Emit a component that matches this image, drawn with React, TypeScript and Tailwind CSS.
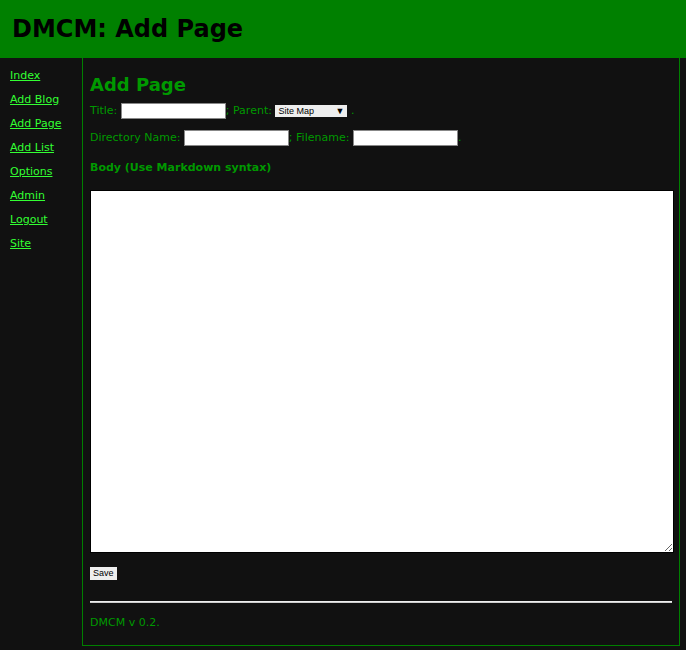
export default function App() {
  const links = ["Index", "Add Blog", "Add Page", "Add List", "Options", "Admin", "Logout", "Site"];
  const f = { fontFamily: '"DejaVu Sans", Verdana, sans-serif' };
  return (
    <div className="w-[686px] h-[650px] bg-[#111111] overflow-hidden" style={f}>
      <div className="h-[58px] bg-[#008000] flex items-center px-[12px]">
        <h1 className="text-[24px] font-bold text-black">DMCM: Add Page</h1>
      </div>
      <div className="flex">
        <div className="w-[82px] pt-[10px] pl-[10px] flex flex-col gap-[9px]">
          {links.map((l) => (
            <a key={l} href="#" className="text-[11px] leading-[15px] text-[#33ff33] underline">{l}</a>
          ))}
        </div>
        <div className="w-[598px] h-[588px] border border-t-0 border-[#008000] px-[7px] pt-[15px] text-[#009900] text-[11px]">
          <h2 className="text-[18px] font-bold leading-[24px]">Add Page</h2>
          <div className="mt-[6px] flex items-center h-[16px]">
            Title:&nbsp;<input className="w-[105px] h-[16px] bg-white border border-[#888]" />
            ; Parent:&nbsp;
            <span className="w-[72px] h-[12px] bg-[#eee] text-black text-[9px] leading-[12px] flex justify-between px-[3px]" style={{ fontFamily: '"Liberation Sans", Arial, sans-serif' }}>
              <span>Site Map</span><span>▼</span>
            </span>&nbsp;.
          </div>
          <div className="mt-[11px] flex items-center h-[16px]">
            Directory Name:&nbsp;<input className="w-[105px] h-[16px] bg-white border border-[#888]" />
            ; Filename:&nbsp;<input className="w-[105px] h-[16px] bg-white border border-[#888]" />.
          </div>
          <div className="mt-[14px] font-bold">Body (Use Markdown syntax)</div>
          <textarea className="mt-[13px] block w-[584px] h-[363px] bg-white border border-black" />
          <button className="mt-[14px] block h-[13px] px-[3px] bg-[#eee] text-black text-[9px] leading-[12px]" style={{ fontFamily: '"Liberation Sans", Arial, sans-serif' }}>Save</button>
          <div className="mt-[21px] h-[2px] bg-[#ccc] border-t border-[#eee]" />
          <div className="mt-[12px]">DMCM v 0.2.</div>
        </div>
      </div>
    </div>
  );
}
